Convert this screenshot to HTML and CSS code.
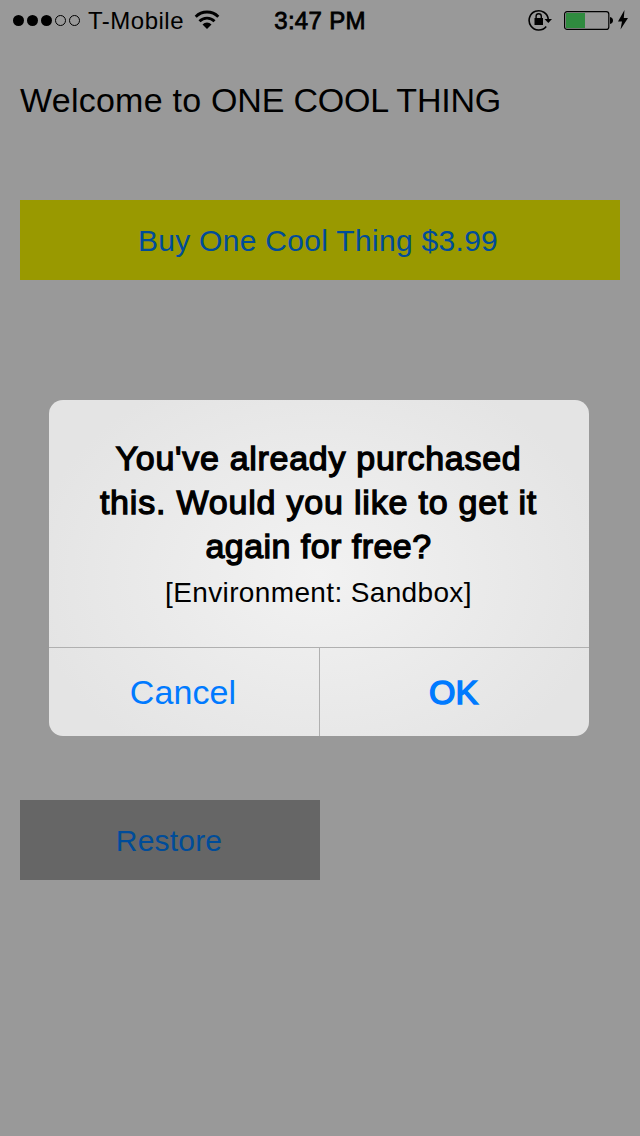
FILE: index.html
```html
<!DOCTYPE html>
<html lang="en">
<head>
<meta charset="utf-8">
<title>One Cool Thing</title>
<link rel="stylesheet" href="styles.css">
</head>
<body>
<div class="screen">
  <header class="status">
    <div class="status-left">
      <svg class="signal" width="68" height="12" viewBox="0 0 68 12">
        <circle cx="5.5" cy="6.500" r="5.5"/><circle cx="19.5" cy="6.500" r="5.5"/><circle cx="33.5" cy="6.500" r="5.5"/>
        <g fill="none" stroke="#000"><circle cx="47.5" cy="6.500" r="5"/><circle cx="61.5" cy="6.500" r="5"/></g>
      </svg>
      <span class="carrier">T-Mobile</span>
      <svg class="wifi" width="26" height="20" viewBox="0 0 26 20">
        <g fill="none" stroke="#000" stroke-width="2.900"><path d="M1.700 6.700a16 16 0 0 1 22.600 0"/><path d="M5.500 11.200a10.600 10.600 0 0 1 15 0"/></g>
        <path d="M8.500 14.400a6.400 6.400 0 0 1 9 0L13 19z"/>
      </svg>
    </div>
    <div class="time">3:47 PM</div>
    <div class="status-right">
      <svg width="24" height="22" viewBox="0 0 24 22">
        <path d="M18.200 17.400A9.600 9.600 0 1 1 20.300 10.500" fill="none" stroke="#000" stroke-width="1.600"/>
        <path d="M16.500 10h7.500l-3.700 4z"/>
        <rect x="6.500" y="9" width="8.500" height="7"/>
        <path d="M8.100 9.500V7.300a2.600 2.600 0 0 1 5.200 0v2.200" fill="none" stroke="#000" stroke-width="1.400"/>
      </svg>
      <svg class="battery" width="50" height="20" viewBox="0 0 50 20">
        <rect x=".6" y="1.600" width="44.200" height="17.800" rx="2.500" fill="none" stroke="#000" stroke-width="1.200"/>
        <rect class="charge" x="2" y="3" width="19" height="15"/>
        <path d="M46 7q3 .8 3 3.500t-3 3.500z"/>
      </svg>
      <svg class="bolt" width="12" height="20" viewBox="0 0 12 20"><path d="M7.500 0L1 11.500h4L3.500 19.500 11 8H6.800z"/></svg>
    </div>
  </header>
  <main class="content">
    <h1 class="welcome"><span class="greeting">Welcome to </span><span class="name">ONE COOL THING</span></h1>
    <button class="btn buy">Buy One Cool Thing $3.99</button>
    <button class="btn restore">Restore</button>
  </main>
  <div class="overlay">
    <section class="dialog">
      <div class="message">
        <h2 class="title"><span class="line one">You've already purchased</span><span class="line two">this. Would you like to get it</span><span class="line three">again for free?</span></h2>
        <p class="env">[Environment: Sandbox]</p>
      </div>
      <div class="actions">
        <button class="action cancel">Cancel</button>
        <button class="action ok">OK</button>
      </div>
    </section>
  </div>
</div>
</body>
</html>
```
FILE: styles.css
```css
* { box-sizing: border-box; }
body, h1, h2, p, button { margin: 0; padding: 0; font-weight: 400; }
body, button { font-family: "Liberation Sans", Arial, sans-serif; }
button { border: 0; background: none; }
svg { display: block; flex: none; }
.screen { position: relative; width: 640px; height: 1136px; background: #999; overflow: hidden; color: #000; }
.status { display: grid; grid-template-columns: 1fr auto 1fr; height: 40px; align-items: center; padding: 0 11px 0 13px; font-size: 24px; line-height: 40px; }
.status-left, .status-right { display: flex; align-items: center; white-space: nowrap; }
.status-right { justify-content: flex-end; }
.carrier { margin-left: 7px; padding-top: 2px; line-height: 38px; letter-spacing: .5px; }
.wifi { margin-left: 10px; }
.time { padding: 2px 2px 0 0; line-height: 38px; -webkit-text-stroke: .8px #000; letter-spacing: .3px; }
.battery { margin-left: 12px; }
.bolt { margin-left: 3px; }
.charge { fill: #2f8b3f; }
.content { display: flex; flex-direction: column; padding: 0 20px; }
.welcome { height: 120px; margin-top: 40px; font-size: 34px; line-height: 40px; white-space: pre; }
.greeting { letter-spacing: .25px; }
.name { letter-spacing: -.2px; }
.btn { height: 80px; padding-top: 2px; font-size: 30px; line-height: 78px; color: #004c99; white-space: nowrap; }
.buy { background: #990; letter-spacing: .3px; padding-right: 4px; }
.restore { width: 300px; margin-top: 520px; background: #666; letter-spacing: .2px; padding-right: 2px; }
.overlay { position: absolute; inset: 0; padding: 400px 51px 0 49px; }
.dialog { width: 540px; height: 336px; border-radius: 14px; overflow: hidden; background: radial-gradient(ellipse 290px 220px at 50% 52%, #f2f2f2, #e4e4e4); }
.message { height: 247px; padding: 36px 1px 0 0; text-align: center; white-space: nowrap; }
.title { font-size: 34px; line-height: 44px; -webkit-text-stroke: 1.3px #000; }
.line { display: block; }
.one { letter-spacing: .7px; }
.two { letter-spacing: .8px; }
.three { letter-spacing: .45px; }
.env { font-size: 28px; line-height: 36px; margin-top: 7px; letter-spacing: .36px; }
.actions { display: grid; grid-template-columns: 271px 269px; height: 89px; border-top: 1px solid #b0b0b0; }
.action { font-size: 34px; line-height: 88px; color: #007aff; }
.cancel { border-right: 1px solid #b0b0b0; padding-right: 2px; letter-spacing: .1px; }
.ok { padding-right: 2px; -webkit-text-stroke: 1.500px #007aff; }
```
